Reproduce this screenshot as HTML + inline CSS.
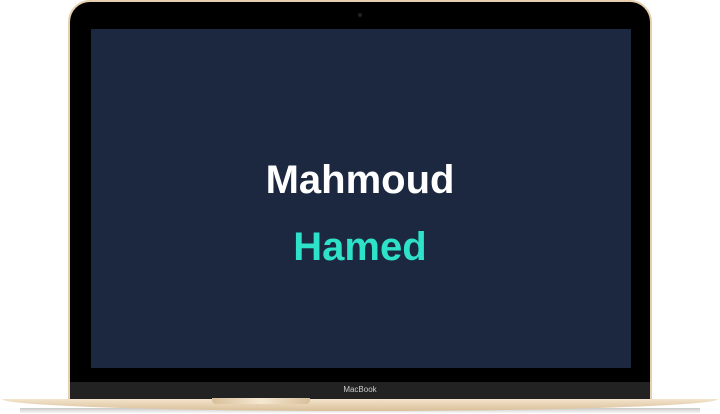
<!DOCTYPE html>
<html><head><style>
body{margin:0;width:720px;height:414px;background:#fff;position:relative;overflow:hidden;font-family:"Liberation Sans",sans-serif}
.lid{position:absolute;left:68px;top:0;width:584px;height:400px;border-radius:22px 22px 0 0;background:#e6cfae;}
.inner{position:absolute;left:70px;top:2px;width:580px;height:398px;border-radius:20px 20px 0 0;background:#000;}
.band{position:absolute;left:70px;top:382px;width:580px;height:18px;background:#222;}
.mb{position:absolute;left:0;width:720px;top:385px;text-align:center;color:#ccc;font-size:8px}
.screen{position:absolute;left:91px;top:29px;width:540px;height:339px;background:#1b2840;}
.cam{position:absolute;left:358px;top:13px;width:4px;height:4px;border-radius:50%;background:#222}
.t1{position:absolute;left:0;width:720px;top:158px;text-align:center;color:#fff;font-weight:bold;font-size:40px}
.t2{position:absolute;left:0;width:720px;top:225px;text-align:center;color:#2de2c8;font-weight:bold;font-size:40px}
.base{position:absolute;left:2px;top:399px;width:716px;height:12px;background:linear-gradient(#f3e4cc,#d9bf98);border-radius:0 0 50% 50%/0 0 100% 100%}
.notch{position:absolute;left:212px;top:398px;width:98px;height:6px;background:linear-gradient(90deg,#d8bf9a,#f5e8d2,#d8bf9a);border-radius:0 0 4px 4px}
.shadow{position:absolute;left:20px;top:408px;width:680px;height:6px;background:linear-gradient(#c9c9c9,#fff)}
</style></head><body>
<div class="shadow"></div>
<div class="lid"></div>
<div class="inner"></div>
<div class="cam"></div>
<div class="band"></div>
<div class="mb">MacBook</div>
<div class="screen"></div>
<div class="t1">Mahmoud</div>
<div class="t2">Hamed</div>
<div class="base"></div>
<div class="notch"></div>
</body></html>
